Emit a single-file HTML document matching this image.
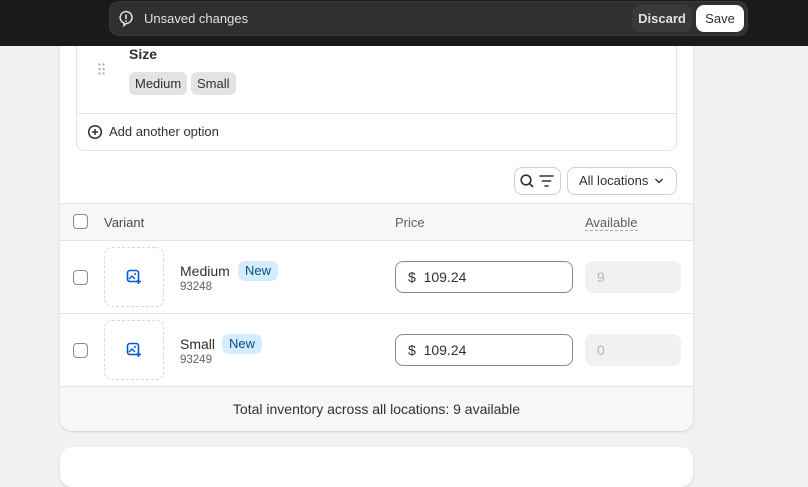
<!DOCTYPE html>
<html><head><style>
*{box-sizing:border-box;margin:0;padding:0}
body{width:808px;height:469px;overflow:hidden;background:#f1f1f1;font-family:"Liberation Sans",sans-serif;color:#303030;position:relative;font-size:13px}
.abs{position:absolute}
.top{left:0;top:0;width:808px;height:46px;background:#1a1a1a}
.pill{left:109px;top:1px;width:639px;height:35px;background:#303030;border-radius:10px;border:1px solid #3a3a3a}
.card{left:60px;top:30px;width:633px;height:401px;background:#fff;border-radius:0 0 12px 12px;box-shadow:0 1px 2px rgba(0,0,0,.15);overflow:hidden}
.box{border:1px solid #e3e3e3;border-radius:8px}
.chip{background:#e3e3e3;border-radius:6px;height:23px;line-height:23px;padding:0 6px;font-size:13px;top:72px}
.btn{border:1px solid #d0d0d0;border-radius:8px;background:#fff}
.cb{width:15px;height:15px;border:1.5px solid #8a8a8a;border-radius:4px;background:#fff}
.badge{background:#d5ebff;color:#00527c;border-radius:7px;height:20px;line-height:20px;padding:0 7px;font-size:13px}
.inp{border:1px solid #8a8a8a;border-radius:8px;height:32px;line-height:30px;padding-left:12px;font-size:14px;background:#fff}
.av{background:#f1f1f1;border-radius:8px;height:32px;line-height:32px;padding-left:12px;color:#b5b5b5;font-size:14px}
.img{border:1px dashed #d8d8d8;border-radius:8px;width:60px;height:60px}
</style></head><body>
<div class="abs card"></div>
<div class="abs box" style="left:76px;top:20px;width:601px;height:131px;background:#fff"></div>
<div class="abs" style="left:77px;top:113px;width:599px;height:1px;background:#e3e3e3"></div>
<div class="abs" style="left:129px;top:46px;font-size:14px;color:#303030;font-weight:bold">Size</div>
<svg class="abs" style="left:98px;top:63px" width="8" height="13"><g fill="#b5b5b5"><circle cx="1.5" cy="1.5" r="1.2"/><circle cx="5.5" cy="1.5" r="1.2"/><circle cx="1.5" cy="6" r="1.2"/><circle cx="5.5" cy="6" r="1.2"/><circle cx="1.5" cy="10.5" r="1.2"/><circle cx="5.5" cy="10.5" r="1.2"/></g></svg>
<div class="abs chip" style="left:129px">Medium</div>
<div class="abs chip" style="left:191px">Small</div>
<svg class="abs" style="left:87px;top:124px" width="16" height="16"><circle cx="8" cy="8" r="6.3" fill="none" stroke="#303030" stroke-width="1.5"/><path d="M8 5v6M5 8h6" stroke="#303030" stroke-width="1.5"/></svg>
<div class="abs" style="left:109px;top:124px;font-size:13px;color:#303030">Add another option</div>

<div class="abs btn" style="left:514px;top:167px;width:47px;height:28px"></div>
<svg class="abs" style="left:519px;top:173px" width="38" height="16"><circle cx="7" cy="7" r="4.8" fill="none" stroke="#303030" stroke-width="1.6"/><path d="M10.5 10.5l3.5 3.5" stroke="#303030" stroke-width="1.6"/><path d="M21 3h13M23.5 8h8M26 13h3" stroke="#303030" stroke-width="1.6" stroke-linecap="round"/></svg>
<div class="abs btn" style="left:567px;top:167px;width:110px;height:28px;line-height:26px;padding-left:11px;font-size:13px;color:#303030">All locations</div>
<svg class="abs" style="left:654px;top:177px" width="10" height="8"><path d="M1.5 2l3.5 3.5L8.5 2" fill="none" stroke="#303030" stroke-width="1.4"/></svg>

<div class="abs" style="left:60px;top:203px;width:633px;height:38px;background:#f7f7f7;border-top:1px solid #e3e3e3;border-bottom:1px solid #e3e3e3"></div>
<div class="abs cb" style="left:73px;top:214px"></div>
<div class="abs" style="left:104px;top:215px;font-size:13px;color:#4a4a4a">Variant</div>
<div class="abs" style="left:395px;top:215px;font-size:13px;color:#616161">Price</div>
<div class="abs" style="left:585px;top:215px;font-size:13px;color:#616161;border-bottom:1px dashed #aaa;line-height:15px">Available</div>

<div class="abs cb" style="left:73px;top:270px"></div>
<div class="abs img" style="left:104px;top:247px"></div>
<svg class="abs" style="left:126px;top:269px" width="16" height="16"><rect x="1.5" y="1.5" width="11" height="11" rx="2.5" fill="none" stroke="#005bd3" stroke-width="1.6"/><path d="M3 10l3-3 3 3" fill="none" stroke="#005bd3" stroke-width="1.4"/><circle cx="9" cy="5" r="1" fill="#005bd3"/><path d="M12.5 10v5M10 12.5h5" stroke="#005bd3" stroke-width="1.6"/></svg>
<div class="abs" style="left:180px;top:263px;font-size:14px">Medium</div>
<div class="abs badge" style="left:238px;top:261px">New</div>
<div class="abs" style="left:180px;top:281px;font-size:11.5px;color:#616161">93248</div>
<div class="abs inp" style="left:395px;top:261px;width:178px">$&nbsp; 109.24</div>
<div class="abs av" style="left:585px;top:261px;width:96px">9</div>
<div class="abs" style="left:60px;top:313px;width:633px;height:1px;background:#e3e3e3"></div>

<div class="abs cb" style="left:73px;top:343px"></div>
<div class="abs img" style="left:104px;top:320px"></div>
<svg class="abs" style="left:126px;top:342px" width="16" height="16"><rect x="1.5" y="1.5" width="11" height="11" rx="2.5" fill="none" stroke="#005bd3" stroke-width="1.6"/><path d="M3 10l3-3 3 3" fill="none" stroke="#005bd3" stroke-width="1.4"/><circle cx="9" cy="5" r="1" fill="#005bd3"/><path d="M12.5 10v5M10 12.5h5" stroke="#005bd3" stroke-width="1.6"/></svg>
<div class="abs" style="left:180px;top:336px;font-size:14px">Small</div>
<div class="abs badge" style="left:222px;top:334px">New</div>
<div class="abs" style="left:180px;top:354px;font-size:11.5px;color:#616161">93249</div>
<div class="abs inp" style="left:395px;top:334px;width:178px">$&nbsp; 109.24</div>
<div class="abs av" style="left:585px;top:334px;width:96px">0</div>

<div class="abs" style="left:60px;top:386px;width:633px;height:45px;background:#f7f7f7;border-top:1px solid #e3e3e3;border-radius:0 0 12px 12px;text-align:center;line-height:45px;font-size:14px">Total inventory across all locations: 9 available</div>

<div class="abs" style="left:60px;top:447px;width:633px;height:40px;background:#fff;border-radius:12px;box-shadow:0 1px 2px rgba(0,0,0,.15)"></div>

<div class="abs top"></div>
<div class="abs pill"></div>
<svg class="abs" style="left:118px;top:10px" width="16" height="17"><path d="M8 1.5a6 6 0 0 1 0 12l-2 2v-2.4A6 6 0 0 1 8 1.5z" fill="none" stroke="#e3e3e3" stroke-width="1.5"/><path d="M8 4.5v4.5" stroke="#e3e3e3" stroke-width="1.6"/><circle cx="8" cy="11" r=".9" fill="#e3e3e3"/></svg>
<div class="abs" style="left:144px;top:11px;color:#e3e3e3;font-size:13px">Unsaved changes</div>
<div class="abs" style="left:632px;top:5px;width:60px;height:27px;background:#3a3a3a;border-radius:8px;color:#e3e3e3;font-weight:bold;text-align:center;line-height:27px">Discard</div>
<div class="abs" style="left:696px;top:5px;width:48px;height:27px;background:#fff;border-radius:8px;color:#303030;text-align:center;line-height:27px">Save</div>
</body></html>
